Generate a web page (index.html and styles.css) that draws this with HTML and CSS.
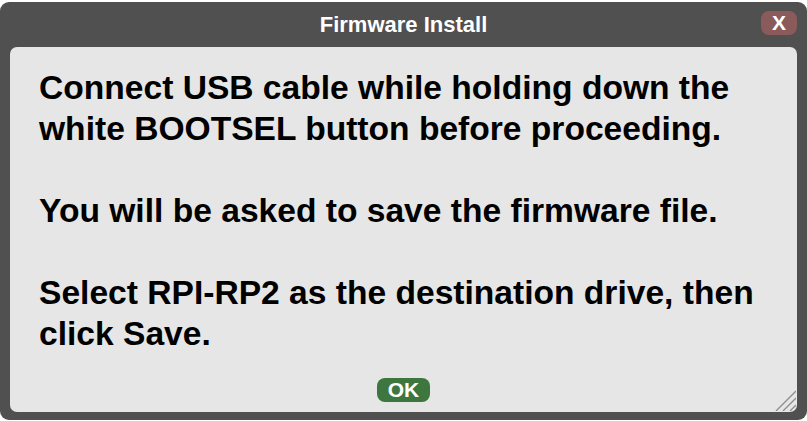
FILE: index.html
```html
<!DOCTYPE html>
<html>
<head>
<meta charset="utf-8">
<link rel="stylesheet" href="styles.css">
</head>
<body>
<div class="dialog">
  <div class="titlebar">
    <span class="title">Firmware Install</span>
    <button class="close">X</button>
  </div>
  <div class="panel">
    <div class="message">
      <p>Connect USB cable while holding down the white BOOTSEL button before proceeding.</p>
      <p>You will be asked to save the firmware file.</p>
      <p>Select RPI-RP2 as the destination drive, then click Save.</p>
    </div>
    <div class="actions"><button class="ok">OK</button></div>
    <svg class="grip" width="22" height="22" viewBox="0 0 22 22">
      <line x1="2" y1="22" x2="22" y2="2" stroke="#8c8c8c" stroke-width="1.3"/>
      <line x1="9" y1="22" x2="22" y2="9" stroke="#8c8c8c" stroke-width="1.3"/>
      <line x1="16" y1="22" x2="22" y2="16" stroke="#8c8c8c" stroke-width="1.3"/>
    </svg>
  </div>
</div>
</body>
</html>
```
FILE: styles.css
```css
html, body {
  margin: 0;
  padding: 0;
  background: #ffffff;
}
body {
  font-family: "Liberation Sans", Arial, sans-serif;
  padding-top: 2px;
}
.dialog {
  width: 807px;
  height: 418px;
  box-sizing: border-box;
  background: #505050;
  border-radius: 9px;
  padding: 0 10px 8px 10px;
  display: flex;
  flex-direction: column;
}
.titlebar {
  height: 45px;
  flex: none;
  display: flex;
  align-items: center;
  justify-content: center;
  position: relative;
}
.title {
  color: #ffffff;
  font-weight: bold;
  font-size: 22px;
}
.close {
  position: absolute;
  right: 0;
  top: 9px;
  width: 36px;
  height: 24px;
  border: none;
  border-radius: 8px;
  background: #8b5b5b;
  color: #ffffff;
  font-family: "Liberation Sans", Arial, sans-serif;
  font-weight: bold;
  font-size: 21px;
  padding: 0;
  line-height: 24px;
}
.panel {
  flex: 1;
  min-height: 0;
  background: #e6e6e6;
  border-radius: 7px;
  position: relative;
  display: flex;
  flex-direction: column;
  padding: 20px 29px 0 29px;
}
.message {
  flex: 1;
  min-height: 0;
  color: #000000;
  font-weight: bold;
  font-size: 33.6px;
  line-height: 41px;
}
.message p {
  margin: 0 0 41px 0;
}
.message p:last-child {
  margin-bottom: 0;
}
.actions {
  display: flex;
  justify-content: center;
  padding-bottom: 10px;
}
.ok {
  width: 53px;
  height: 24px;
  border: none;
  border-radius: 8px;
  background: #3d773f;
  color: #ffffff;
  font-family: "Liberation Sans", Arial, sans-serif;
  font-weight: bold;
  font-size: 21px;
  padding: 0;
  line-height: 24px;
}
.grip {
  position: absolute;
  right: 1px;
  bottom: 1px;
}
```
